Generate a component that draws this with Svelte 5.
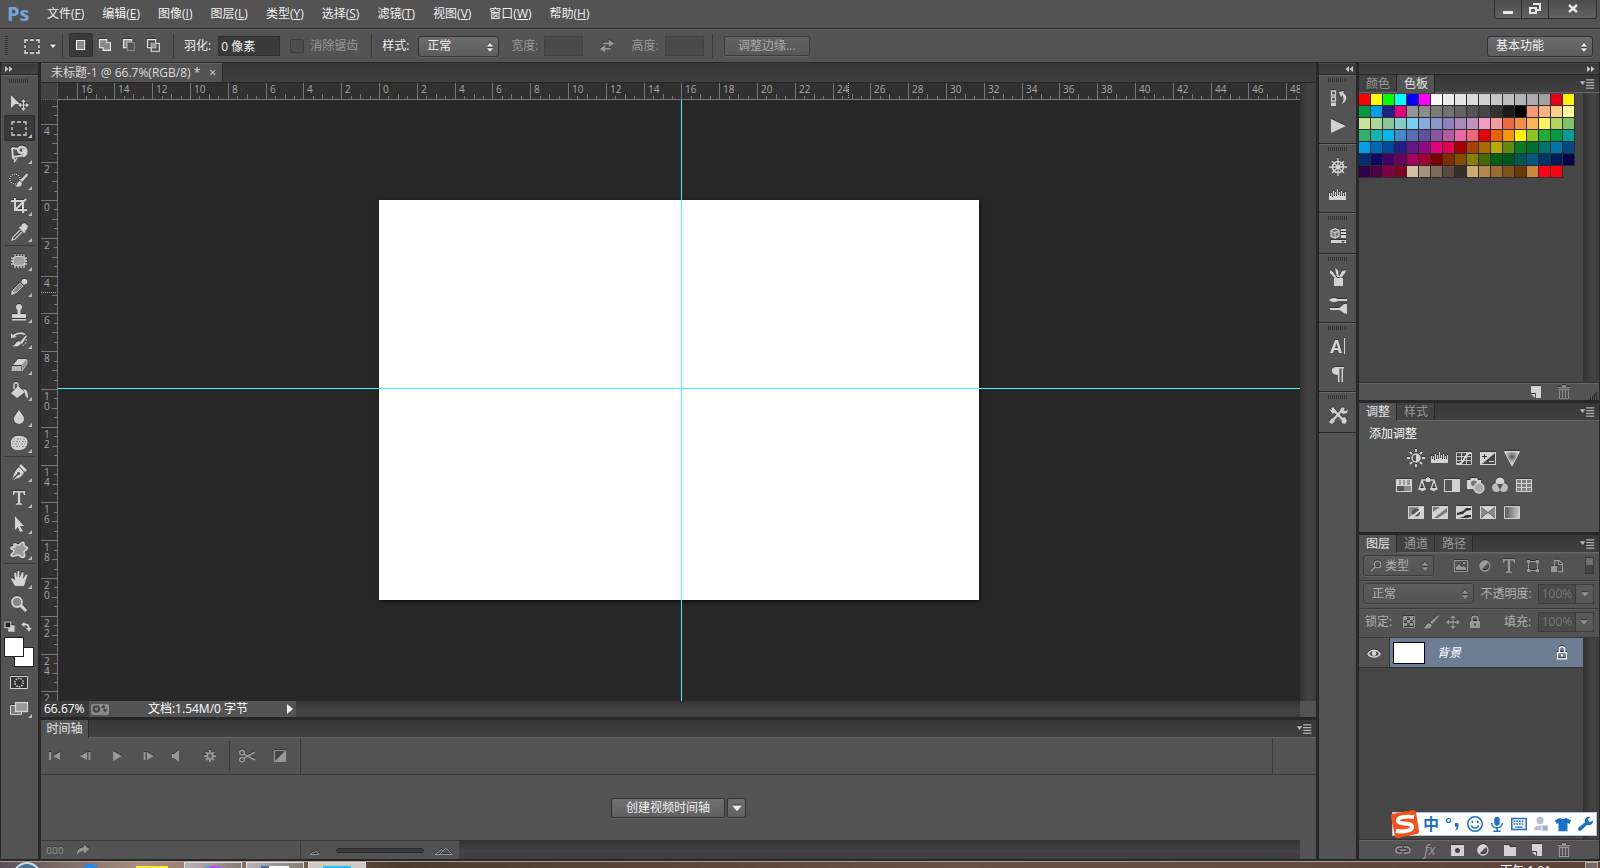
<script>
  const menus = [
    ['文件', 'F'], ['编辑', 'E'], ['图像', 'I'], ['图层', 'L'], ['类型', 'Y'],
    ['选择', 'S'], ['滤镜', 'T'], ['视图', 'V'], ['窗口', 'W'], ['帮助', 'H']
  ]

  const toolGroups = [
    ['move', 'marquee', 'lasso', 'quick', 'crop', 'eyedropper'],
    ['patch', 'pencil', 'stamp', 'history', 'eraser', 'bucket', 'blur', 'sponge'],
    ['pen', 'type', 'arrow', 'shape'],
    ['hand', 'zoom']
  ]
  const noFlyout = ['move', 'zoom']

  const dockGroups = [
    ['historyPanel', 'play'],
    ['wheel', 'histogram'],
    ['cube'],
    ['brushes', 'brushPresets'],
    ['character', 'paragraph'],
    ['toolPresets']
  ]

  const adjustments = [
    ['sun', 'histogram', 'curves', 'exposure', 'vibrance'],
    ['hue', 'balance', 'bw', 'photo', 'mixer', 'lookup'],
    ['invert', 'posterize', 'threshold', 'selective', 'gradient']
  ]

  const swatches = [
    'ff0000 ffff00 00ff00 00ffff 0000ff ff00ff ffffff ededed e4e4e4 dadada d1d1d1 c7c7c7 bdbdbd b4b4b4 aaaaaa a0a0a0 e60012 fff100',
    '009944 00a0e9 1d2088 e4007f 969696 8c8c8c 7d7d7d 727272 646464 555555 464646 333333 1a1a1a 000000 f29b76 f6b37f facd89 fff799',
    'cce198 acd598 89c997 84ccc9 7ecef4 88abda 8c97cb 8f82bc aa89bd c490bf f19ec2 f29c9f eb6841 f19149 f8b551 fff45c b3d465 80c269',
    '32b16c 13b5b1 00b7ee 448aca 556fb5 5f52a0 8957a1 ae5da1 ea68a2 eb6877 e60012 eb6100 f39800 fff100 8fc31f 22ac38 009944 009e96',
    '00a0e9 0068b7 00479d 1d2088 601986 920783 e4007f e5004f a40000 a84200 ac6a00 b7aa00 638c0b 097c25 007130 00736d 0075a9 004986',
    '002e73 100964 440062 6a005f a4005b a40035 7d0000 7f2d00 834e00 8a8000 486a00 005e15 00561f 005752 005982 003567 001c58 03004c',
    '31004a 500047 7e0043 7d0022 d2bfa4 a6937c 7d6a58 5a493f 362e2b cfa972 b28850 996c33 81511c 6a3906 ca873f ff0018 ff0010'
  ].join(' ').split(' ')

  // rulers: 18.9px per centimetre at 66.7%
  const unit = 18.9
  const page = { width: 600, height: 400 }
  let viewWidth = $state(1242)
  let viewHeight = $state(601)
  let originX = $derived((viewWidth - page.width) / 2)
  let originY = $derived(Math.floor((viewHeight - page.height) / 2))

  function ticks(origin, length) {
    const step = unit / 2
    const list = []
    for (let k = -Math.floor(origin / step); origin + k * step < length; k++) {
      list.push({
        at: Math.round(origin + k * step),
        size: k % 4 == 0 ? 16 : k % 2 == 0 ? 5 : 3,
        label: k % 4 == 0 ? String(Math.abs(k / 2)) : ''
      })
    }
    return list
  }

  let ticksX = $derived(ticks(originX, viewWidth))
  let ticksY = $derived(ticks(originY, viewHeight))

  let tool = $state('marquee')
  let feather = $state('0 像素')

  // every icon sits on a 20x20 grid
  const icons = {
    move: '<path d="M2 3v13l4-4h5z"/><path d="M14.500 8.500v9M10 13h9M13 10l1.500-2 1.500 2M13 16l1.500 2 1.500-2M12 11.500L10 13l2 1.500M17 11.500l2 1.500-2 1.500" fill="none" stroke="currentColor" stroke-width="1.200"/>',
    marquee: '<path d="M3 7V4h3M8 4h4M14 4h3v3M17 9v3M17 14v3h-3M12 17H8M6 17H3v-3M3 12V9" fill="none" stroke="currentColor" stroke-width="1.300"/>',
    lasso: '<path d="M3 4l6 1M3 4l1 9 12-2" fill="none" stroke="currentColor" stroke-width="2"/><path d="M14 12c4-1 5-9-1-9-5 0-5 6 0 6 3 0 3-3 0-3" fill="none" stroke="currentColor" stroke-width="2.600"/><path d="M3 13l4 4M5 18l3-4" fill="none" stroke="currentColor" stroke-width="1.300"/>',
    quick: '<circle cx="6" cy="9" r="5" fill="none" stroke="currentColor" stroke-width="1.200" stroke-dasharray="1 1.200"/><path d="M18 3l1 2-6 7-2-2zM11 11l2 2c0 3-3 5-7 3 3-1 2-4 5-5z"/>',
    crop: '<path d="M6 2v12h12M2 5h12v12M7 13l10-10" fill="none" stroke="currentColor" stroke-width="2"/>',
    eyedropper: '<path d="M13 2l3-1 3 3-1 3-2 2 1 1-2 1-5-5 1-2 1 1z"/><path d="M11 8l-7 7-1 3 3-1 7-7" fill="none" stroke="currentColor" stroke-width="1.300"/>',
    patch: '<path d="M6 3v14M9 3v14M12 3v14M15 3v14M2 7h16M2 10h16M2 13h16" stroke="currentColor" stroke-width="1.300"/><rect x="4" y="5.500" width="12" height="9" rx="3" fill="#a0a0a0" stroke="currentColor"/>',
    pencil: '<path d="M14 3l3 3-2 2-3-3z"/><circle cx="15.500" cy="4.500" r="2.800"/><path d="M11 6l3 3-7 7-3-3z" fill="#8a8a8a" stroke="currentColor" stroke-width=".8"/><path d="M3 13l3.500 3.500L2 18z"/>',
    stamp: '<circle cx="10" cy="4" r="3"/><path d="M8.500 6h3v5H17v4H3v-4h5.500zM3 16h14v1.500H3z"/>',
    history: '<path d="M4 6c3-3 9-4 13-1l-2 1C12 4 8 5 6 7l2 1-6 1V4zM17 6l1 1-5 8-2-2zM10 12l2 2c-1 3-4 4-9 3 4-1 3-4 7-5z"/><path d="M17 10c1 4-2 6-4 7" fill="none" stroke="currentColor" stroke-dasharray="2 1"/>',
    eraser: '<path d="M9 4h9l-5 6H4z"/><path d="M3 11h9v5H2.500z" fill="#b5b5b5"/><path d="M13 11l5-6v4l-5 7z" fill="#8d8d8d" stroke="currentColor" stroke-width=".7"/>',
    bucket: '<path d="M9 5l7 6-8 6-6-5z"/><path d="M9 10V4c0-3-4-3-4 0v4" fill="none" stroke="currentColor" stroke-width="1.500"/><path d="M14 8c4 0 5 3 5 9-2 0-3-3-3-5z"/>',
    blur: '<path d="M10 2c1 4 5 6 5 10a5 5 0 0 1-10 0c0-4 4-6 5-10z"/>',
    sponge: '<path d="M5 4c3-2 8-1 11 0 3 2 3 5 2 8-1 4-5 5-9 5s-7-2-7-6c0-3 0-5 3-7z"/><path d="M5 6h12M4 8.500h13M3 11h14M4 13.500h13" stroke="#858585" stroke-dasharray="1 2 2 1"/>',
    pen: '<path d="M12 2l6 6-2 2-6-6zM10 5l5 5c-2 5-5 6-12 8 2-6 3-10 7-13z"/><path d="M3.500 17.500L9 12" stroke="#444" stroke-width="1.200"/><circle cx="9.500" cy="11.500" r="1.500" fill="#444"/>',
    type: '<path d="M4 3h12v4h-1l-1-2.500h-2.800V15l2 .8v1H6.800v-1l2-.8V4.500H6L5 7H4z"/>',
    arrow: '<path d="M6 2v14l3-3 2 5 3-1-3-5h4z"/>',
    shape: '<path d="M5 4c2-1 3 2 5 1s2-3 4-3 0 3 2 4 3 1 2 3-3 1-3 3 2 3 0 5-4-2-6-2-3 2-6 1 2-3 2-5-3-1-3-3 4 0 4-1-2-2-1-3z" fill="#999" stroke="currentColor" stroke-width="1.700"/>',
    hand: '<path d="M6 17L2 10l1-1 3 2-1-7 2-.5L8 9l.5-7h1.800L10.500 9 13 3l1.600.6L14 10l3-5 1.400 1-2.400 8-1 3z"/>',
    zoom: '<path d="M11 10l2-1 5 6-2 2-5-5z"/><circle cx="8" cy="7" r="5" fill="#868686" stroke="currentColor" stroke-width="1.800"/>',
    mask: '<path d="M1.500 4.500h17v12h-17z" fill="#333" stroke="currentColor"/><circle cx="10" cy="10.500" r="4.200" fill="none" stroke="currentColor" stroke-width="1.500" stroke-dasharray="1.500 1.100"/>',
    screen: '<path d="M1.500 7.500h11v9h-11z" fill="#777" stroke="currentColor"/><path d="M6.500 4.500h12v9h-12z" fill="#999" stroke="currentColor" stroke-width="1.300"/>',
    selNew: '<path d="M5 5h9v10H5z" fill="#888" stroke="currentColor" stroke-width="1.200"/>',
    selAdd: '<path d="M4 4h8v3h4v9H8v-3H4z" fill="#888" stroke="currentColor" stroke-width="1.200"/>',
    selSub: '<path d="M4 13V4h9v3H8v6z" fill="#888" stroke="currentColor" stroke-width="1.200"/><path d="M8 7h8v9H8z" fill="#535353" stroke="#999"/>',
    selInt: '<path d="M4 4h9v9H4zM8 8h9v9H8z" fill="none" stroke="currentColor" stroke-width="1.200"/><path d="M8 8h5v5H8z" fill="#999"/>',
    swap: '<path d="M6 6h6V3l6 4-6 4V8H6zM14 14H8v3l-6-4 6-4v3h6z"/>',
    historyPanel: '<path d="M3.500 3h4v4h-4zM3.500 9h4v4h-4z" fill="none" stroke="currentColor" stroke-width="1.300"/><path d="M3 14.500h5V18H3zM11 4l5-1-1 2c5 2 4 9-1 11 2-4 2-7 0-9l-1 2z"/>',
    play: '<path d="M3 3l15 7-15 7z"/>',
    wheel: '<path d="M10 1v18M1 10h18M4 4l12 12M16 4L4 16" stroke="currentColor" stroke-width="1.400"/><circle cx="10" cy="10" r="5.500" fill="none" stroke="currentColor" stroke-width="1.700"/><circle cx="10" cy="10" r="2"/>',
    histogram: '<path d="M1 15V8h1v3h1V8h1v4h1V6h1v5h1V7h1v4h1V4h1v6h1V7h1v4h1V6h1v5h1V8h1v3h1V7h1v8z"/>',
    cube: '<path d="M3 4.500l4-2 4 2V10l-4 2-4-2z" fill="#777" stroke="currentColor" stroke-width="1.300"/><path d="M3 5l4 2 4-2M7 7v5" fill="none" stroke="currentColor"/><path d="M13 3h5v2h-5zM13 6h5v2h-5zM13 9h5v3h-5zM3 14h15v3H3z"/><path d="M13 15h4l-2 2z" fill="#333"/>',
    brushes: '<path d="M6 11h9v8H6zM9 10L7 1l3 2 1 7zM7 11L2 6V3l3 2 4 6zM11 10l3-6 4-1-1 3-4 5z"/>',
    brushPresets: '<path d="M1 5c3-3 7-2 9-1h9v2h-9c-3 2-7 1-9-1zM2 13h9c3-1 4-5 8-4v10c-3 0-5-3-8-4H2z"/>',
    character: '<path d="M7 4h3l4 13h-3l-1-3H6l-1 3H2zM8.500 7L7 12h3z" fill-rule="evenodd"/><path d="M16.500 2v16" stroke="currentColor"/>',
    paragraph: '<path d="M8 3h8v1.500h-1V18h-1.500V4.500h-2V18H10v-7C2 11 2 3 8 3z"/>',
    toolPresets: '<path d="M4 3l12 13M16 3L4 16" stroke="currentColor" stroke-width="2.400"/><path d="M1 4l3 1 1-3 3 4-3 3zM15 1l-1 4 4 1 2-2-1 4-4 1-3-4zM13 13l4-1 2 4-2 3-3-1zM1 17l3-4 3 3-3 3z"/>',
    newDoc: '<path d="M5 4h10v12h-5v-5H5z"/><path d="M5 12h4v4z"/>',
    trash: '<path d="M4 5h12v1.500H4zM8 3h4v2H8z"/><path d="M5.500 7.500h9v9h-9zM8.500 8v8M11.500 8v8" fill="none" stroke="currentColor" stroke-width="1.200"/>',
    sun: '<path d="M10 1v3M10 16v3M1 10h3M16 10h3M4 4l2 2M14 14l2 2M16 4l-2 2M6 14l-2 2" stroke="currentColor" stroke-width="1.800"/><circle cx="10" cy="10" r="4" fill="none" stroke="currentColor" stroke-width="1.500"/><path d="M10 6a4 4 0 0 1 0 8z"/>',
    curves: '<path d="M2.500 4.500h15v12h-15zM2 8.500h16M2 12.500h16M7.500 4v13M12.500 4v13" fill="none" stroke="currentColor" stroke-width=".9"/><path d="M3 16c9 0 6-11 14-11" fill="none" stroke="currentColor" stroke-width="2"/>',
    exposure: '<path d="M2 4h16v13H2z"/><path d="M17 5v11H4z" fill="#444"/><path d="M4 8.500h5M6.500 6v5" stroke="#333"/><path d="M11 13.500h5" stroke="#ddd"/>',
    vibrance: '<defs><radialGradient id="core" cy=".35" r=".45"><stop stop-color="#555"/><stop offset="1" stop-color="#ccc"/></radialGradient></defs><path d="M2.500 3.500h15L10 18z" fill="url(#core)" stroke="currentColor"/>',
    hue: '<path d="M2 4h16v13H2z"/><path d="M5 5h2v5H5zM9 5h2v5H9zM13 5h3v5h-3z" fill="#999"/><path d="M3 11h7v5H3z" fill="#555"/><path d="M10 11h7v5h-7z" fill="#888"/>',
    balance: '<path d="M10 2v3M4 5h12M4 5l-3 9h6zM16 5l-3 9h6z" fill="none" stroke="currentColor" stroke-width="1.300"/><path d="M1 13h7c-1 4-6 4-7 0zM12 13h7c-1 4-6 4-7 0zM8 3h4v4H8z"/>',
    bw: '<path d="M2 4h16v13H2z"/><path d="M3 5h7v11H3z" fill="#555"/>',
    photo: '<path d="M1 5h3l1-2h6l1 2h3v9H1z"/><circle cx="8" cy="8.500" r="3" fill="#777"/><circle cx="13" cy="13" r="5" fill="#aaa" stroke="currentColor" stroke-width="1.300"/>',
    mixer: '<circle cx="10" cy="7" r="4.500"/><circle cx="6.500" cy="12.500" r="4.500" fill="#bbb"/><circle cx="13.500" cy="12.500" r="4.500" fill="#bbb"/><path d="M7 9h6l-3 6z" fill="#555"/>',
    lookup: '<path d="M2 4h16v13H2z"/><path d="M3 5h4v3H3zM8 5h4v3H8zM13 5h4v3h-4zM3 9h4v3H3zM8 9h4v3H8zM13 9h4v3h-4zM3 13h4v3H3zM8 13h4v3H8zM13 13h4v3h-4z" fill="#7c7c7c"/>',
    invert: '<path d="M2 4h16v13H2z"/><path d="M3 5h10L3 16z" fill="#888"/><circle cx="10" cy="10.500" r="4" fill="#555"/><path d="M3 16L17 5v2L9 14z" fill="#ddd"/>',
    posterize: '<path d="M2 4h16v13H2z"/><path d="M3 5h7l-7 5zM17 6v4L8 16H4z" fill="#777"/>',
    threshold: '<path d="M2 4h16v13H2z"/><path d="M3 11l6-2 3-3h5v2l-5 1-3 3-6 1zM5 16l4-1 3-2h5v2l-4 1z" fill="#333"/>',
    selective: '<path d="M2 4h16v13H2z"/><path d="M3 5l7 5.500L3 16zM17 5l-7 5.500 7 5.500z" fill="#888"/><path d="M3 5l14 11M17 5L3 16" stroke="#444" stroke-width=".6"/>',
    gradient: '<defs><linearGradient id="fade"><stop stop-color="#555"/><stop offset="1" stop-color="#ccc"/></linearGradient></defs><path d="M2.500 4.500h15v12h-15z" fill="url(#fade)" stroke="currentColor"/>',
    image: '<path d="M3.500 4.500h13v11h-13z" fill="none" stroke="currentColor"/><path d="M5 14v-3l3-3 3 3 2-1 2 2v2zM12 6h2v2h-2z"/>',
    adjust: '<circle cx="10" cy="10" r="5" fill="none" stroke="currentColor" stroke-width="1.300"/><path d="M14 6L6 14A5.500 5.500 0 0 1 14 6z"/>',
    transform: '<path d="M5.500 5.500h9v9h-9z" fill="none" stroke="currentColor"/><path d="M4 4h3v3H4zM13 4h3v3h-3zM4 13h3v3H4zM13 13h3v3h-3z"/>',
    smart: '<path d="M7.500 10V4.500h5l3 3v8H11" fill="none" stroke="currentColor" stroke-width="1.300"/><path d="M4 10h6v6H4zM11 4h1v4h4v1h-5z"/>',
    checker: '<path d="M4.500 4.500h11v11h-11z" fill="none" stroke="currentColor"/><path d="M5 5h3v3H5zM11 5h3v3h-3zM8 8h3v3H8zM14 8h1v3h-1zM5 11h3v3H5zM11 11h3v3h-3z"/>',
    brush: '<path d="M17 3l1 1-7 8-2-2zM8 11l3 2c-1 4-5 4-9 3 4-1 2-4 6-5z"/>',
    cross: '<path d="M10 4v12M4 10h12M8 6l2-2 2 2M8 14l2 2 2-2M6 8l-2 2 2 2M14 8l2 2-2 2" fill="none" stroke="currentColor" stroke-width="1.300"/>',
    lock: '<path d="M7 9V7c0-3.500 6-3.500 6 0v2" fill="none" stroke="currentColor" stroke-width="1.600"/><path d="M5 9h10v7H5z"/><path d="M10 11v3" stroke="#444" stroke-width="1.500"/>',
    lockBadge: '<path d="M7 9V6c0-4 6-4 6 0v3M5 9.500h10v7H5z" fill="none" stroke="currentColor" stroke-width="1.400"/><path d="M10 11v3" stroke="currentColor" stroke-width="1.800"/>',
    eye: '<path d="M4 11c3-5 9-5 12 0-3 4-9 4-12 0z" fill="#444" stroke="currentColor" stroke-width="1.500"/><circle cx="10" cy="10.500" r="2.400"/>',
    link: '<path d="M9 7H6a3 3 0 0 0 0 6h3M11 7h3a3 3 0 0 1 0 6h-3M7 10h6" fill="none" stroke="currentColor" stroke-width="1.600"/>',
    layerMask: '<path d="M4 5h13v11H4z"/><circle cx="10.500" cy="10.500" r="2.500" fill="#444"/>',
    folder: '<path d="M4 5h5l1 2h6v9H4z"/>',
    first: '<path d="M4 6h2v8H4zM15 6v8l-7-4z"/>',
    prev: '<path d="M4 10l7-4v8zM12.500 6h2v8h-2z"/>',
    next: '<path d="M16 10L9 6v8zM5.500 6h2v8h-2z"/>',
    start: '<path d="M6 5l9 5-9 5z"/>',
    sound: '<path d="M3 8h2l5-4v12l-5-4H3z"/>',
    gear: '<path d="M10 4v12M4 10h12M6 6l8 8M14 6l-8 8" stroke="currentColor" stroke-width="2"/><circle cx="10" cy="10" r="2.800" fill="#535353" stroke="currentColor" stroke-width="1.800"/>',
    scissors: '<path d="M7 8l11 6M7 12l11-6" stroke="currentColor" stroke-width="1.600"/><circle cx="5" cy="6.500" r="2.300" fill="none" stroke="currentColor" stroke-width="1.500"/><circle cx="5" cy="13.500" r="2.300" fill="none" stroke="currentColor" stroke-width="1.500"/>',
    transition: '<path d="M4.500 4.500h11v11h-11z" fill="#444" stroke="currentColor"/><path d="M15 5v10H5z"/>',
    frames: '<path d="M1.500 7.500h4v6h-4zM8 7.500h4v6H8zM14.500 7.500h4v6h-4z" fill="none" stroke="currentColor"/>',
    share: '<path d="M3 16c0-6 3-9 8-9V4l6 5-6 5v-3c-4 0-6 1-8 5z"/>',
    hillSmall: '<path d="M5 14.500h9L11.500 11l-2 2-1-1z" fill="none" stroke="currentColor"/>',
    hillBig: '<path d="M1 14.500h17l-6-7-3 3.500-1.500-1.500zM6 14l5-5" fill="none" stroke="currentColor"/>',
    sync: '<circle cx="6" cy="10" r="3" fill="none" stroke="currentColor" stroke-width="2.500"/><path d="M11 9l3-4 2 3h-1v2h3l-2 4-3-3h1V9z"/>',
    search: '<circle cx="12" cy="8" r="4" fill="none" stroke="currentColor" stroke-width="1.600"/><path d="M9 11l-5 5" stroke="currentColor" stroke-width="2.200"/>',
    menu: '<path d="M1 7h6l-3 4z"/><path d="M8 5.500h9M8 8.500h9M8 11.500h9M8 14.500h9" stroke="currentColor" stroke-width="1.300"/>',
    updown: '<path d="M5 9l5-6 5 6zM5 12l5 6 5-6z"/>',
    down: '<path d="M4 7h12l-6 7z"/>',
    right: '<path d="M2 4l7 6-7 6zM10 4l7 6-7 6z"/>',
    left: '<path d="M10 4l-7 6 7 6zM18 4l-7 6 7 6z"/>',
    resetColors: '<path d="M8 8h10v10H8z"/><path d="M3 3h9v9H3z" fill="#222" stroke="currentColor" stroke-width="1.700"/>',
    swapColors: '<path d="M2 7l5-5v3c5 0 8 2 8 7h3l-4 6-5-6h3c0-3-2-4-5-4v3z"/>',
    smile: '<circle cx="10" cy="10" r="8" fill="none" stroke="currentColor" stroke-width="1.700"/><path d="M7 6.500v2.500M13 6.500v2.500M6 11.500c1 4 7 4 8 0" fill="none" stroke="currentColor" stroke-width="1.600"/>',
    mic: '<rect x="7" y="2" width="6" height="10" rx="3"/><path d="M4 9c0 7 12 7 12 0M10 14v4M6 18h8" fill="none" stroke="currentColor" stroke-width="1.700"/>',
    keyboard: '<path d="M2 4h16v12H2z" fill="none" stroke="currentColor" stroke-width="1.700"/><path d="M4 7h12M4 10h12" stroke="currentColor" stroke-width="1.700" stroke-dasharray="2 1"/><path d="M6 13.500h8" stroke="currentColor" stroke-width="1.500"/>',
    person: '<circle cx="9" cy="6" r="4"/><path d="M2 17c0-7 14-7 14 0z"/><path d="M11 11h7v7h-7z" fill="#9fb2cc" stroke="#fff"/>',
    shirt: '<path d="M7 3c1 2 5 2 6 0l6 3-2 4-2-1v9H5V9L3 10 1 6z"/>',
    wrench: '<path d="M3 14l7-6c-1-4 2-7 6-6l-3 3 2 3 4-2c0 4-3 6-7 5l-6 6c-3 2-5-1-3-3z"/>',
    comma: '<circle cx="5" cy="6" r="2.200" fill="none" stroke="currentColor" stroke-width="1.400"/><path d="M12 9h4v4c0 3-2 4-4 4 1-1 2-2 2-4h-2z"/>'
  }
</script>

{#snippet icon(name, size = 20)}
  <svg class="icon" width={size} height={size} viewBox="0 0 20 20" fill="currentColor" aria-hidden="true">{@html icons[name]}</svg>
{/snippet}

{#snippet grip()}
  <div class="grip"></div>
{/snippet}

<div class="app">
  <header class="menubar">
    <span class="logo">Ps</span>
    <nav>
      {#each menus as [label, key]}
        <button>{label}(<u>{key}</u>)</button>
      {/each}
    </nav>
    <div class="window-buttons">
      <button aria-label="最小化"><svg width="12" height="12"><path d="M1 8h10v3H1z" fill="#e6e6e6" /></svg></button>
      <button aria-label="还原"><svg width="14" height="12"><path d="M5 1h7v6H9M2 5h6v5H2z" fill="none" stroke="#e6e6e6" stroke-width="2" /></svg></button>
      <button class="close" aria-label="关闭"><svg width="12" height="12"><path d="M2 2l8 7M10 2L2 9" stroke="#e6e6e6" stroke-width="2.400" /></svg></button>
    </div>
  </header>

  <div class="options">
    <div class="side-grip"></div>
    <button class="preset" aria-label="工具预设">{@render icon('marquee')}{@render icon('down', 10)}</button>
    <div class="modes">
      <button class="on" aria-label="新选区">{@render icon('selNew', 18)}</button>
      <button aria-label="添加到选区">{@render icon('selAdd', 18)}</button>
      <button aria-label="从选区减去">{@render icon('selSub', 18)}</button>
      <button aria-label="与选区交叉">{@render icon('selInt', 18)}</button>
    </div>
    <div class="field feather">
      <label for="feather">羽化:</label>
      <input id="feather" bind:value={feather}>
      <label class="check dim"><input type="checkbox" disabled>消除锯齿</label>
    </div>
    <div class="field style">
      <label for="style">样式:</label>
      <span class="select"><select id="style"><option>正常</option></select>{@render icon('updown', 12)}</span>
      <label class="dim" for="w">宽度:</label>
      <input class="short" id="w" disabled>
      <span class="swap">{@render icon('swap', 18)}</span>
      <label class="dim" for="h">高度:</label>
      <input class="short" id="h" disabled>
    </div>
    <button class="push refine" disabled>调整边缘...</button>
    <span class="select workspace"><select aria-label="工作区"><option>基本功能</option></select>{@render icon('updown', 12)}</span>
  </div>

  <main>
    <aside class="column">
      <div class="strip start">{@render icon('right', 10)}</div>
      <div class="toolbar">
        {@render grip()}
        {#each toolGroups as group}
          <div class="tools">
            {#each group as name}
              <button class="tool" class:on={tool == name} aria-label={name} onclick={() => tool = name}>
                {@render icon(name)}
                {#if !noFlyout.includes(name)}<i class="flyout"></i>{/if}
              </button>
            {/each}
          </div>
        {/each}
        <div class="mini">{@render icon('resetColors', 13)}{@render icon('swapColors', 13)}</div>
        <div class="colors"><span></span><span></span></div>
        <button class="tool" aria-label="快速蒙版">{@render icon('mask')}</button>
        <button class="tool" aria-label="屏幕模式">{@render icon('screen')}<i class="flyout"></i></button>
      </div>
    </aside>

    <section class="center">
      <div class="document">
        <div class="doc-tabs">
          <div class="doc-tab">未标题-1 @ 66.7%(RGB/8) * <button aria-label="关闭文档">×</button></div>
        </div>
        <div class="view">
          <div class="corner"></div>
          <svg class="ruler top">
            {#each ticksX as t}
              <rect x={t.at} y={16 - t.size} width="1" height={t.size} />
              {#if t.label}<text x={t.at + 4} y="10">{t.label}</text>{/if}
            {/each}
            <path class="cursor" d="M{originX + 469.5} 0v16" />
          </svg>
          <svg class="ruler side">
            {#each ticksY as t}
              <rect x={16 - t.size} y={t.at} width={t.size} height="1" />
              {#if t.label}
                <text y={t.at + 11}>{#each t.label as digit, i}<tspan x="3" dy={i * 10}>{digit}</tspan>{/each}</text>
              {/if}
            {/each}
            <path class="cursor" d="M0 {originY + 92.5}h16" />
          </svg>
          <div class="canvas" bind:clientWidth={viewWidth} bind:clientHeight={viewHeight}>
            <div class="page"></div>
            <div class="guide-v" style="left: {Math.round(originX + 16 * unit)}px"></div>
            <div class="guide-h" style="top: {Math.floor(originY + 10 * unit) - 1}px"></div>
          </div>
          <div class="vscroll"></div>
        </div>
        <div class="status">
          <span class="percent">66.67%</span>
          <div class="info">
            <span class="sync">{@render icon('sync', 18)}</span>
            <span>文档:1.54M/0 字节</span>
            <i class="play"></i>
          </div>
          <div class="hscroll"></div>
          <div class="scroll-corner"></div>
        </div>
      </div>

      <div class="timeline">
        <div class="tabs">
          <button class="on">时间轴</button>
          <span class="panel-menu">{@render icon('menu', 18)}</span>
        </div>
        <div class="controls">
          <div class="transport">
            {#each ['first', 'prev', 'start', 'next', 'sound', 'gear'] as name}
              <button aria-label={name}>{@render icon(name)}</button>
            {/each}
          </div>
          <div class="cut">
            <button aria-label="拆分">{@render icon('scissors')}</button>
            <button aria-label="过渡">{@render icon('transition')}</button>
          </div>
          <div class="track-end"></div>
        </div>
        <div class="create">
          <button class="push">创建视频时间轴</button>
          <button class="push more" aria-label="更多">{@render icon('down', 16)}</button>
        </div>
        <div class="timeline-foot">
          <div class="foot-left">{@render icon('frames', 18)}{@render icon('share', 18)}</div>
          <div class="foot-zoom">
            {@render icon('hillSmall')}
            <input type="range" aria-label="缩放时间轴" disabled>
            {@render icon('hillBig')}
          </div>
          <div class="hscroll"></div>
          <div class="scroll-corner"></div>
        </div>
      </div>
    </section>

    <aside class="column">
      <div class="strip end dock-strip">{@render icon('left', 10)}</div>
      <div class="dock">
        {#each dockGroups as group}
          <div class="dock-group">
            {@render grip()}
            {#each group as name}
              <button aria-label={name}>{@render icon(name)}</button>
            {/each}
          </div>
        {/each}
      </div>
    </aside>

    <aside class="column panels">
      <div class="strip end">{@render icon('right', 10)}</div>
      <section class="panel">
        <div class="tabs">
          <button>颜色</button>
          <button class="on">色板</button>
          <span class="panel-menu">{@render icon('menu', 18)}</span>
        </div>
        <div class="swatch-body">
          <div class="swatches">
            {#each swatches as color}
              <button aria-label="#{color}" style="background: #{color}"></button>
            {/each}
          </div>
          <div class="vscroll"></div>
        </div>
        <div class="swatch-foot">
          {@render icon('newDoc')}
          <span class="dim">{@render icon('trash')}</span>
          <i class="resize"></i>
        </div>
      </section>

      <section class="panel">
        <div class="tabs">
          <button class="on">调整</button>
          <button>样式</button>
          <span class="panel-menu">{@render icon('menu', 18)}</span>
        </div>
        <div class="adjustments">
          <p>添加调整</p>
          {#each adjustments as row}
            <div class="adjust-row">
              {#each row as name}
                <button aria-label={name}>{@render icon(name)}</button>
              {/each}
            </div>
          {/each}
        </div>
      </section>

      <section class="panel layers">
        <div class="tabs">
          <button class="on">图层</button>
          <button>通道</button>
          <button>路径</button>
          <span class="panel-menu">{@render icon('menu', 18)}</span>
        </div>
        <div class="layer-row filter">
          <span class="select quiet kind">
            <span class="lens">{@render icon('search', 16)}</span>
            <select aria-label="滤镜类型"><option>类型</option></select>{@render icon('updown', 12)}
          </span>
          <div class="filter-icons">
            {#each ['image', 'adjust', 'type', 'transform', 'smart'] as name}
              {@render icon(name)}
            {/each}
          </div>
          <i class="switch"></i>
        </div>
        <div class="layer-row">
          <span class="select quiet blend"><select aria-label="混合模式"><option>正常</option></select>{@render icon('updown', 12)}</span>
          <label for="opacity">不透明度:</label>
          <span class="combo"><input id="opacity" value="100%" disabled><button aria-label="不透明度">{@render icon('down', 12)}</button></span>
        </div>
        <div class="layer-row lock-row">
          <span>锁定:</span>
          <div class="locks">
            {#each ['checker', 'brush', 'cross', 'lock'] as name}
              {@render icon(name)}
            {/each}
          </div>
          <label for="fill">填充:</label>
          <span class="combo"><input id="fill" value="100%" disabled><button aria-label="填充">{@render icon('down', 12)}</button></span>
        </div>
        <div class="layer-body">
          <div class="layer-list">
            <div class="layer">
              <button class="eye" aria-label="可见性">{@render icon('eye')}</button>
              <div class="layer-main">
                <span class="thumb"></span>
                <em>背景</em>
                {@render icon('lockBadge', 18)}
              </div>
            </div>
          </div>
          <div class="vscroll"></div>
        </div>
        <div class="layer-foot">
          <span class="dim">{@render icon('link')}</span>
          <span class="dim fx">fx</span>
          {@render icon('layerMask')}
          {@render icon('adjust')}
          {@render icon('folder')}
          {@render icon('newDoc')}
          <span class="dim">{@render icon('trash')}</span>
        </div>
      </section>
    </aside>
  </main>

  <footer class="taskbar">
    <i class="orb"></i>
    <i class="browser"></i>
    <i class="explorer"></i>
    <div class="task"><i class="purple"></i></div>
    <div class="task"><i class="sheet"></i></div>
    <div class="task lit"><i class="ps"></i></div>
    <span class="clock">下午 1:01</span>
    <button class="desktop" aria-label="显示桌面"></button>
  </footer>

  <div class="ime">
    <svg class="ime-logo" width="30" height="30" viewBox="0 0 30 30">
      <path d="M2 5l21-4q2 0 3 2l3 19q0 3-2 3L8 29q-3 0-3-2L1 8q0-2 1-3z" fill="#f4511e" />
      <path d="M24 8C15 7 7 8 8 12c1 4 14 1 14 6 0 4-9 5-16 4" fill="none" stroke="#fff" stroke-width="4" />
    </svg>
    <button class="lang">中</button>
    {#each ['comma', 'smile', 'mic', 'keyboard', 'person', 'shirt', 'wrench'] as name}
      <button class:pale={name == 'person'} aria-label={name}>{@render icon(name, 18)}</button>
    {/each}
  </div>
</div>

<style>
  :global(body) {
    margin: 0;
    background: #282828;
  }
  .app, .app :global(*) {
    box-sizing: border-box;
  }
  .app {
    position: relative;
    display: flex;
    flex-direction: column;
    min-height: 100vh;
    overflow: hidden;
    color: #f0f0f0;
    font: 12px/16px "Open Sans", "Noto Sans CJK SC", sans-serif;
  }
  button, input, select {
    margin: 0;
    padding: 0;
    border: 0;
    border-radius: 0;
    background: none;
    color: inherit;
    font: inherit;
    appearance: none;
  }
  button {
    display: flex;
    align-items: center;
    justify-content: center;
    white-space: nowrap;
  }
  .icon {
    flex: none;
    display: block;
    filter: drop-shadow(0 -1px 0 #333);
  }
  .dim {
    color: #989898;
  }

  /* menu bar */
  .menubar {
    display: flex;
    height: 29px;
    padding-left: 7px;
    background: #535353;
    border-bottom: 1px solid #282828;
  }
  .logo {
    width: 31px;
    color: #74a3d8;
    font-size: 20px;
    font-weight: 700;
    line-height: 27px;
  }
  nav {
    display: flex;
    flex: 1;
  }
  nav button {
    padding: 0 9px;
  }
  .window-buttons {
    display: flex;
    height: 19px;
    margin-right: 3px;
    border: 1px solid #2c2c2c;
    border-top: 0;
    border-radius: 0 0 3px 3px;
    background: linear-gradient(#4c4c4c, #626262);
  }
  .window-buttons button {
    width: 27px;
    border-right: 1px solid #2c2c2c;
  }
  .window-buttons .close {
    width: 47px;
    border: 0;
  }

  /* options bar */
  .options {
    display: flex;
    align-items: center;
    height: 34px;
    padding: 0 7px 0 5px;
    background: #535353;
    border-top: 1px solid #666;
    border-bottom: 1px solid #282828;
  }
  .side-grip {
    width: 3px;
    height: 20px;
    background: repeating-linear-gradient(#333 0 1px, #535353 1px 2px);
  }
  .preset {
    gap: 6px;
    margin-left: 14px;
    padding-right: 4px;
  }
  .modes {
    display: flex;
    gap: 2px;
    height: 24px;
    padding: 0 9px 0 7px;
    border-left: 1px solid #3a3a3a;
    border-right: 1px solid #3a3a3a;
  }
  .modes button {
    width: 22px;
    height: 22px;
    border-radius: 2px;
  }
  .modes .on {
    background: #3a3a3a;
    box-shadow: 0 0 0 1px #303030;
  }
  .field {
    display: flex;
    align-items: center;
    height: 24px;
    border-right: 1px solid #3a3a3a;
    white-space: nowrap;
  }
  .feather {
    padding: 0 13px 0 10px;
  }
  .style {
    gap: 6px;
    padding: 0 8px 0 10px;
  }
  .field input:not([type]) {
    width: 62px;
    height: 20px;
    padding: 0 2px;
    background: #3a3a3a;
    border: 1px solid #303030;
  }
  .field input:not([type]):disabled {
    width: 39px;
    background: #4a4a4a;
    border-color: #434343;
  }
  #feather {
    margin-left: 7px;
  }
  .check {
    display: flex;
    align-items: center;
    gap: 6px;
    margin-left: 10px;
  }
  .check input {
    width: 14px;
    height: 14px;
    background: #4d4d4d;
    border: 1px solid #3b3b3b;
    border-radius: 2px;
  }
  .swap {
    margin: 0 9px;
    color: #989898;
  }
  .select {
    position: relative;
    display: block;
    width: 81px;
    height: 21px;
    color: #f0f0f0;
    background: linear-gradient(#6c6c6c, #5c5c5c);
    border: 1px solid #333;
    border-radius: 3px;
    box-shadow: 0 1px 0 #646464;
  }
  .select select {
    width: 100%;
    height: 100%;
    padding-left: 8px;
  }
  .select > .icon {
    position: absolute;
    top: 4px;
    right: 2px;
    pointer-events: none;
  }
  .style .select {
    margin: 0 6px 0 3px;
  }
  .push {
    height: 20px;
    color: #f0f0f0;
    background: linear-gradient(#717171, #606060);
    border: 1px solid #303030;
    border-radius: 2px;
    box-shadow: 0 1px 0 #646464;
  }
  .refine {
    width: 86px;
    margin-left: 11px;
    color: #a8a8a8;
    background: linear-gradient(#616161, #595959);
    border-color: #3c3c3c;
  }
  .workspace {
    width: 106px;
    margin-left: auto;
  }

  /* main area */
  main {
    display: grid;
    grid-template-columns: 37px 1fr 37px 240px;
    gap: 3px;
    flex: 1;
    padding: 0 1px;
  }
  .column {
    display: flex;
    flex-direction: column;
  }
  .strip {
    display: flex;
    align-items: center;
    height: 12px;
    padding: 0 3px;
    color: #c8c8c8;
    background: linear-gradient(#3a3a3a, #424242);
    border-top: 1px solid #484848;
    border-bottom: 1px solid #282828;
  }
  .end {
    justify-content: flex-end;
  }
  .toolbar, .dock {
    flex: 1;
    background: #535353;
  }
  .grip {
    width: 20px;
    height: 4px;
    margin: 3px auto 2px;
    background: repeating-linear-gradient(90deg, #333 0 1px, #535353 1px 2px);
  }
  .toolbar > .grip {
    margin: 3px auto 6px 8px;
  }
  .toolbar {
    border-top: 1px solid #666;
    color: #d2d2d2;
  }
  .tools {
    margin: 0 3px;
  }
  .tools + .tools {
    padding-top: 2px;
    border-top: 1px solid #3a3a3a;
  }
  .tool {
    position: relative;
    width: 31px;
    height: 26px;
    padding-right: 1px;
    border-radius: 2px;
  }
  .toolbar > .tool {
    margin-left: 3px;
  }
  .tool.on {
    background: #3a3a3a;
    box-shadow: inset 0 0 0 1px #2e2e2e;
  }
  .flyout {
    position: absolute;
    right: 3px;
    bottom: 3px;
    border: 2px solid transparent;
    border-right-color: #bbb;
    border-bottom-color: #bbb;
  }
  .mini {
    display: flex;
    justify-content: space-between;
    align-items: center;
    height: 17px;
    padding: 0 5px 0 2px;
  }
  .colors {
    display: grid;
    grid-template: 10px 10px 10px / 10px 10px 10px;
    margin: 2px 0 2px 3px;
  }
  .colors span {
    grid-area: 1 / 1 / 3 / 3;
    z-index: 1;
    background: #fff;
    border: 1px solid #222;
  }
  .colors span + span {
    grid-area: 2 / 2 / 4 / 4;
    z-index: 0;
  }
  .dock-strip {
    padding-right: 2px;
  }
  .dock {
    color: #d2d2d2;
  }
  .dock-group {
    padding-bottom: 3px;
    border-top: 1px solid #666;
    border-bottom: 1px solid #282828;
  }
  .dock-group .grip {
    margin-top: 2px;
  }
  .dock-group button {
    width: 37px;
    height: 28px;
    padding-left: 1px;
  }

  /* document window */
  .center {
    display: flex;
    flex-direction: column;
    gap: 3px;
    min-width: 0;
  }
  .document {
    display: flex;
    flex-direction: column;
    flex: 1;
  }
  .doc-tabs {
    display: flex;
    height: 20px;
    background: linear-gradient(#383838, #3e3e3e);
    border-bottom: 1px solid #282828;
  }
  .doc-tab {
    display: flex;
    align-items: center;
    justify-content: space-between;
    width: 182px;
    padding: 0 6px 0 10px;
    color: #dcdcdc;
    background: #535353;
    border-top: 1px solid #666;
    border-right: 1px solid #282828;
    white-space: nowrap;
  }
  .view {
    display: grid;
    grid-template: 17px 1fr / 17px 1fr 16px;
    flex: 1;
  }
  .corner {
    border-right: 1px dotted #6a6a6a;
    border-bottom: 1px dotted #6a6a6a;
    background: #424242;
  }
  .ruler {
    display: block;
    width: 100%;
    height: 100%;
    min-height: 0;
    overflow: hidden;
    contain: size;
    background: #303030;
    fill: #787878;
    shape-rendering: crispEdges;
  }
  .ruler text {
    fill: #a8a8a8;
    font-size: 10px;
  }
  .cursor {
    stroke: #b0b0b0;
    stroke-dasharray: 1 1;
  }
  .top {
    border-bottom: 1px solid #787878;
  }
  .side {
    grid-area: 2 / 1;
    border-right: 1px solid #787878;
  }
  .canvas {
    grid-area: 2 / 2;
    position: relative;
    display: flex;
    align-items: center;
    justify-content: center;
    padding-bottom: 1px;
    background: #282828;
  }
  .page {
    width: 600px;
    height: 400px;
    background: #fff;
    box-shadow: 1px 2px 4px #111;
  }
  .guide-v, .guide-h {
    position: absolute;
    background: #4df3f3;
  }
  .guide-v {
    top: 0;
    bottom: 0;
    width: 1px;
  }
  .guide-h {
    left: 0;
    right: 0;
    height: 1px;
  }
  .vscroll {
    width: 16px;
    background: linear-gradient(90deg, #333, #444 60%, #3e3e3e);
  }
  .view .vscroll {
    grid-area: 1 / 3 / 3 / 4;
  }
  .hscroll {
    flex: 1;
    background: linear-gradient(#333, #444 60%, #3e3e3e);
  }
  .scroll-corner {
    width: 16px;
    background: #535353;
  }
  .status {
    display: flex;
    height: 16px;
    color: #fff;
    line-height: 16px;
  }
  .percent {
    width: 48px;
    padding-left: 3px;
    background: #3c3c3c;
  }
  .info {
    display: flex;
    align-items: center;
    justify-content: space-between;
    width: 207px;
    padding: 0 3px 0 2px;
    background: #535353;
  }
  .sync {
    height: 11px;
    overflow: hidden;
    display: flex;
    align-items: center;
    color: #454545;
    background: #8a8a8a;
    border-radius: 2px;
  }
  .sync .icon, .ime .icon {
    filter: none;
  }
  .play {
    border: 5px solid transparent;
    border-left: 6px solid #eee;
    border-right: 0;
  }

  /* tabs shared by all panels */
  .tabs {
    display: flex;
    height: 18px;
    background: linear-gradient(#383838, #404040);
    border-bottom: 1px solid #666;
  }
  .tabs button {
    padding: 0 6px 0 7px;
    color: #999;
    background: #424242;
    border-right: 1px solid #282828;
    line-height: 16px;
  }
  .tabs .on {
    height: 18px;
    color: #e4e4e4;
    background: #535353;
  }
  .panel-menu {
    margin-left: auto;
    padding-right: 2px;
    color: #b8b8b8;
  }

  /* timeline */
  .timeline {
    background: #535353;
  }
  .timeline .tabs button {
    width: 48px;
    padding: 0;
  }
  .controls {
    display: flex;
    height: 37px;
    color: #989898;
    border-bottom: 1px solid #3a3a3a;
  }
  .transport {
    display: flex;
    align-items: center;
    gap: 11px;
    width: 189px;
    margin: 3px 0;
    padding-left: 4px;
    border-right: 1px solid #3a3a3a;
  }
  .cut {
    display: flex;
    align-items: center;
    gap: 13px;
    width: 71px;
    padding-left: 7px;
    border-right: 1px solid #3a3a3a;
  }
  .track-end {
    width: 44px;
    margin-left: auto;
    border-left: 1px solid #3a3a3a;
  }
  .create {
    display: flex;
    align-items: center;
    justify-content: center;
    gap: 2px;
    height: 65px;
  }
  .create .push {
    width: 114px;
  }
  .create .more {
    width: 19px;
  }
  .timeline-foot {
    display: flex;
    height: 19px;
    color: #989898;
  }
  .foot-left, .foot-zoom {
    display: flex;
    align-items: center;
    border-top: 1px solid #3a3a3a;
  }
  .foot-left {
    gap: 10px;
    width: 260px;
    padding-left: 5px;
    border-right: 1px solid #3a3a3a;
  }
  .foot-zoom {
    justify-content: space-between;
    width: 158px;
    padding: 0 5px 0 4px;
  }
  .foot-zoom input {
    width: 88px;
    height: 5px;
    background: #3a3a3a;
    border: 1px solid #2c2c2c;
    border-radius: 3px;
  }
  .foot-zoom input::-webkit-slider-thumb {
    appearance: none;
  }

  /* right panels */
  .panels {
    color: #d2d2d2;
  }
  .panel {
    margin-bottom: 3px;
    background: #535353;
  }
  .swatch-body {
    display: flex;
    height: 290px;
    background: #464646;
    border-bottom: 1px solid #333;
  }
  .swatches {
    display: grid;
    grid-template-columns: repeat(18, 12px);
    align-content: start;
    flex: 1;
    padding-top: 1px;
  }
  .swatches button {
    height: 12px;
    border: solid #2c2c2c;
    border-width: 0 1px 1px 0;
  }
  .swatch-foot {
    display: flex;
    align-items: center;
    justify-content: flex-end;
    gap: 8px;
    height: 17px;
    padding-right: 1px;
    border-top: 1px solid #666;
  }
  .swatch-foot .dim {
    margin-right: 6px;
    color: #888;
  }
  .resize {
    align-self: flex-end;
    width: 10px;
    height: 10px;
    background: repeating-linear-gradient(90deg, #262626 0 1px, transparent 1px 2px);
    clip-path: polygon(100% 0, 100% 100%, 0 100%);
  }
  .adjustments {
    height: 111px;
    padding: 5px 30px 0 10px;
  }
  .adjustments p {
    margin: 0 0 2px;
    color: #f8f8f8;
  }
  .adjust-row {
    display: flex;
    justify-content: center;
    gap: 4px;
    height: 27px;
    margin-right: 10px;
  }
  .layers {
    display: flex;
    flex-direction: column;
    flex: 1;
    margin: 0;
  }
  .layer-row {
    display: flex;
    align-items: center;
    justify-content: space-between;
    height: 28px;
    padding: 0 5px 2px 4px;
    color: #b0b0b0;
    border-bottom: 1px solid #3a3a3a;
    box-shadow: inset 0 1px 0 #5e5e5e;
  }
  .layer-row .icon {
    color: #989898;
  }
  .lock-row {
    height: 29px;
    padding-left: 6px;
  }
  .quiet {
    color: #b0b0b0;
    background: linear-gradient(#5c5c5c, #545454);
    border-color: #3d3d3d;
  }
  .kind {
    width: 71px;
  }
  .kind select {
    padding-left: 21px;
  }
  .lens {
    position: absolute;
    top: 2px;
    left: 4px;
  }
  .filter-icons {
    display: flex;
    gap: 4px;
    margin-right: 2px;
  }
  .switch {
    width: 9px;
    height: 17px;
    background: linear-gradient(#707070 50%, #444 50%);
    border: 1px solid #3a3a3a;
  }
  .blend {
    width: 111px;
  }
  .combo {
    display: flex;
    width: 56px;
    height: 20px;
    border: 1px solid #3d3d3d;
  }
  .combo input {
    width: 36px;
    color: #777;
    background: #4a4a4a;
    text-align: center;
  }
  .combo button {
    flex: 1;
    background: #5a5a5a;
    border-left: 1px solid #3d3d3d;
  }
  .locks {
    display: flex;
    gap: 2px;
    margin-right: 12px;
  }
  .layer-body {
    display: flex;
    flex: 1;
    background: #464646;
    border-bottom: 1px solid #333;
  }
  .layer-list {
    flex: 1;
  }
  .layer {
    display: flex;
    height: 30px;
    background: #535353;
    border-bottom: 1px solid #333;
  }
  .eye {
    width: 31px;
    padding-right: 1px;
    border-right: 1px solid #333;
  }
  .layer-main {
    display: flex;
    align-items: center;
    flex: 1;
    padding: 0 12px 0 3px;
    color: #fff;
    background: #6c7d94;
  }
  .thumb {
    width: 32px;
    height: 22px;
    background: #fff;
    border: 1px solid #000;
  }
  em {
    flex: 1;
    margin-left: 12px;
  }
  .layer-foot {
    display: flex;
    align-items: center;
    justify-content: space-between;
    height: 19px;
    padding: 0 25px 0 34px;
    border-top: 1px solid #666;
  }
  .fx {
    width: 20px;
    font-size: 14px;
    font-style: italic;
    text-align: center;
  }

  /* desktop taskbar */
  .taskbar {
    display: flex;
    gap: 4px;
    height: 6px;
    margin-top: 3px;
    padding: 0 2px 0 13px;
    overflow: hidden;
    background: linear-gradient(90deg, #5c4f58, #a98f80 9%, #4d3a2e 25%, #6a5148 60%, #5c4238);
    box-shadow: 0 -1px 0 #b0a096;
  }
  .orb {
    width: 28px;
    height: 28px;
    border-radius: 50%;
    background: #4a7590;
    border: 2px solid #c4dceb;
  }
  .browser {
    width: 20px;
    height: 20px;
    margin: 2px 32px 0 35px;
    border-radius: 50%;
    background: #1d8df0;
  }
  .explorer {
    width: 32px;
    height: 10px;
    margin: 4px 12px 0 0;
    background: #f7ef2e;
  }
  .task {
    display: flex;
    justify-content: center;
    width: 58px;
    height: 20px;
    background: linear-gradient(90deg, #b8b2b8, #857b76);
    border: 1px solid #ddd;
  }
  .lit {
    background: #d0c8c2;
  }
  .task i {
    width: 28px;
    height: 14px;
    margin-top: 3px;
  }
  .purple {
    border-radius: 50% 50% 0 0;
    background: linear-gradient(90deg, #4a9cf5 40%, #c23ff0 40%);
  }
  .sheet {
    background: linear-gradient(90deg, #4d6ca8 30%, #fff 30%);
  }
  .ps {
    background: #14233a;
    border: 2px solid #1fc4f4;
  }
  .clock {
    margin: 1px 0 0 auto;
    color: #fff;
  }
  .desktop {
    width: 13px;
    height: 20px;
    margin-left: 30px;
    border: 1px solid #b9aca6;
    background: #776a66;
  }

  /* floating input method bar */
  .ime {
    position: absolute;
    right: 3px;
    bottom: 32px;
    display: flex;
    align-items: center;
    height: 24px;
    color: #1b70c8;
    background: #fff;
    border: 1px solid #b7c6d6;
  }
  .ime-logo {
    margin-left: -3px;
  }
  .ime button {
    width: 22px;
    height: 22px;
  }
  .ime .lang {
    font-size: 16px;
    font-weight: 700;
  }
  .ime .pale {
    color: #b4c2d8;
  }
</style>
